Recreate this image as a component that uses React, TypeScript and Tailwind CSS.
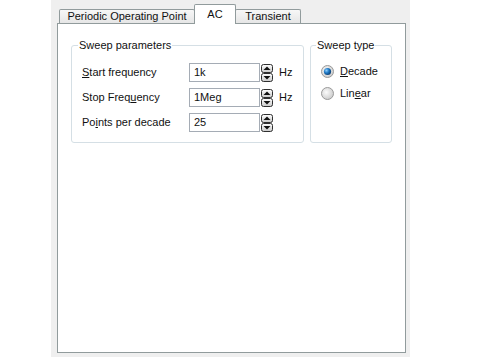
import React from "react";

const SpinButton = ({ dir }: { dir: "up" | "down" }) => (
  <svg width="12" height="9" viewBox="0 0 12 9">
    <defs>
      <linearGradient id={`sg-${dir}`} x1="0" y1="0" x2="0" y2="1">
        <stop offset="0" stopColor="#ffffff" />
        <stop offset="1" stopColor="#c9c9c9" />
      </linearGradient>
    </defs>
    <rect x="0.5" y="0.5" width="11" height="8" rx="2" fill={`url(#sg-${dir})`} stroke="#2f2f2f" />
    {dir === "up" ? (
      <path d="M2.5 6 L6 2.5 L9.5 6 Z" fill="#111" />
    ) : (
      <path d="M2.5 3 L6 6.5 L9.5 3 Z" fill="#111" />
    )}
  </svg>
);

const Spinner = () => (
  <div className="ml-[1px] flex flex-col">
    <SpinButton dir="up" />
    <SpinButton dir="down" />
  </div>
);

const Radio = ({ checked }: { checked?: boolean }) => (
  <svg width="13" height="13" viewBox="0 0 13 13">
    <defs>
      <radialGradient id="rg-off" cx="0.4" cy="0.4" r="0.7">
        <stop offset="0" stopColor="#fbfbfb" />
        <stop offset="1" stopColor="#c6c6c6" />
      </radialGradient>
      <radialGradient id="rg-dot" cx="0.35" cy="0.35" r="0.7">
        <stop offset="0" stopColor="#8fd0ff" />
        <stop offset="0.5" stopColor="#1d78c4" />
        <stop offset="1" stopColor="#0b3c70" />
      </radialGradient>
    </defs>
    <circle cx="6.5" cy="6.5" r="6" fill="url(#rg-off)" stroke="#9a9a9a" />
    {checked && <circle cx="6.5" cy="6.5" r="3.6" fill="url(#rg-dot)" />}
  </svg>
);

const FieldRow = ({
  label,
  value,
  unit,
}: {
  label: React.ReactNode;
  value: string;
  unit?: string;
}) => (
  <div className="flex items-center h-[19px]">
    <div className="w-[107px]">{label}</div>
    <div className="w-[71px] h-[19px] border border-[#a5acb5] bg-white pl-[4px] flex items-center">{value}</div>
    <Spinner />
    {unit && <span className="ml-[6px]">{unit}</span>}
  </div>
);

export default function App() {
  return (
    <div className="w-[493px] h-[357px] bg-white flex text-[11px] leading-[13px] text-[#111] font-['Liberation_Sans',Arial,sans-serif]">
      <div className="ml-[51px] w-[359px] h-[357px] bg-[#efefef] flex flex-col pl-[6px] pr-[4px] pb-[4px]">
        <div className="relative z-10 flex items-start h-[24px] -mb-px pl-[2px]">
          <div className="mt-[9px] h-[14px] w-[136px] border border-b-0 border-[#919b9c] rounded-t-[2px] bg-gradient-to-b from-[#f7f7f7] to-[#e6e6e6] flex items-center justify-center">
            Periodic Operating Point
          </div>
          <div className="mt-[4px] h-[20px] w-[42px] -ml-px border border-b-0 border-[#919b9c] rounded-t-[2px] bg-white flex items-center justify-center pb-[1px]">
            AC
          </div>
          <div className="mt-[9px] h-[14px] w-[66px] -ml-px border border-b-0 border-[#919b9c] rounded-t-[2px] bg-gradient-to-b from-[#f7f7f7] to-[#e6e6e6] flex items-center justify-center">
            Transient
          </div>
        </div>
        <div className="flex-1 bg-white border border-[#919b9c] pl-[13px] pt-[15px] flex gap-[6px] items-start">
          <fieldset className="w-[233px] h-[104px] border border-[#d5dfe5] rounded-[3px]">
            <legend className="ml-[6px] px-[1px]">Sweep parameters</legend>
            <div className="pl-[10px] pt-[11px] flex flex-col gap-[6px]">
              <FieldRow
                label={<><span className="underline">S</span>tart frequency</>}
                value="1k"
                unit="Hz"
              />
              <FieldRow
                label={<>Stop Freq<span className="underline">u</span>ency</>}
                value="1Meg"
                unit="Hz"
              />
              <FieldRow
                label={<>Po<span className="underline">i</span>nts per decade</>}
                value="25"
              />
            </div>
          </fieldset>
          <fieldset className="w-[82px] h-[104px] border border-[#d5dfe5] rounded-[3px]">
            <legend className="ml-[5px] px-[1px]">Sweep type</legend>
            <div className="pl-[10px] pt-[13px] flex flex-col gap-[9px]">
              <div className="flex items-center gap-[6px]">
                <Radio checked />
                <span>
                  <span className="underline">D</span>ecade
                </span>
              </div>
              <div className="flex items-center gap-[6px]">
                <Radio />
                <span>
                  Lin<span className="underline">e</span>ar
                </span>
              </div>
            </div>
          </fieldset>
        </div>
      </div>
    </div>
  );
}
